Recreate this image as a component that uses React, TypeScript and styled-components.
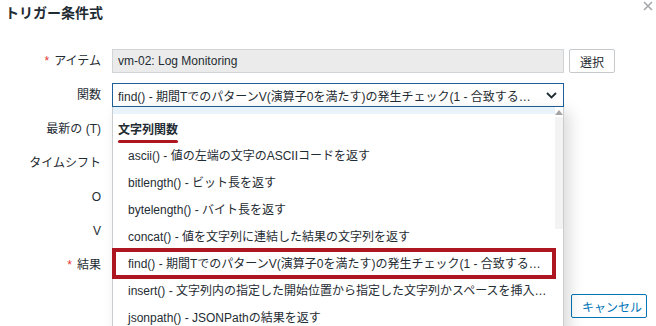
import styled, { createGlobalStyle } from "styled-components";

const GlobalStyle = createGlobalStyle`
  html, body {
    margin: 0;
    padding: 0;
    background: #ffffff;
    overflow: hidden;
  }
  body {
    font-family: "Liberation Sans", "Noto Sans CJK JP", Arial, sans-serif;
    font-size: 12px;
    color: #1f2c33;
  }
  * {
    box-sizing: border-box;
  }
`;

const Dialog = styled.div`
  width: 656px;
  height: 326px;
  display: flex;
  flex-direction: column;
  background: #ffffff;
  overflow: hidden;
`;

const Header = styled.div`
  display: flex;
  justify-content: space-between;
  align-items: flex-start;
  height: 26px;
  padding: 4px 3px 0 5px;
`;

const Title = styled.h4`
  margin: 0;
  font-size: 14px;
  line-height: 18px;
  font-weight: 700;
  color: #1f2c33;
`;

const CloseButton = styled.button`
  display: flex;
  margin-top: -3px;
  padding: 0;
  border: 0;
  background: none;
  color: #a3a8ab;
`;

const Form = styled.div`
  display: grid;
  grid-template-columns: 101px 452px;
  column-gap: 11px;
  row-gap: 10px;
  margin-top: 23px;
`;

const Label = styled.div<{ $required?: boolean }>`
  height: 24px;
  line-height: 24px;
  text-align: right;
  white-space: nowrap;
  color: #1f2c33;

  &::before {
    content: ${(p) => (p.$required ? '"*"' : "none")};
    color: #e33734;
    margin-right: 5px;
  }
`;

const Field = styled.div`
  position: relative;
  display: flex;
  gap: 5px;
  height: 24px;
`;

const TextInput = styled.div<{ $readOnly?: boolean; $width?: number }>`
  width: ${(p) => (p.$width ? `${p.$width}px` : "100%")};
  flex-shrink: 0;
  height: 24px;
  line-height: 22px;
  padding: 0 5px;
  border: 1px solid #d2d5d7;
  background: ${(p) => (p.$readOnly ? "#ebebeb" : "#ffffff")};
  color: #1f2c33;
  white-space: nowrap;
`;

const Button = styled.button<{ $primary?: boolean }>`
  height: 24px;
  padding: 0 10px;
  border: 1px solid ${(p) => (p.$primary ? "#0275b8" : "#c6cacc")};
  border-radius: 2px;
  background: #ffffff;
  color: ${(p) => (p.$primary ? "#0275b8" : "#1f2c33")};
  font-family: inherit;
  font-size: 12px;
  white-space: nowrap;
`;

const SelectBox = styled.div`
  display: flex;
  align-items: center;
  width: 452px;
  height: 24px;
  padding: 0 6px 0 5px;
  border: 1px solid #1d5f96;
  background: #ffffff;
`;

const SelectText = styled.span`
  flex: 1;
  min-width: 0;
  overflow: hidden;
  white-space: nowrap;
  text-overflow: ellipsis;
  padding-right: 6px;
`;

const Dropdown = styled.div`
  position: absolute;
  top: 100%;
  left: 0;
  width: 452px;
  height: 240px;
  display: flex;
  border: 1px solid #c9cdcf;
  border-top: 0;
  background: #ffffff;
  box-shadow: 6px 4px 14px rgba(0, 0, 0, 0.14);
  z-index: 10;
`;

const List = styled.ul`
  flex: 1;
  min-width: 0;
  margin: 0;
  padding: 0;
  list-style: none;
`;

const ScrolledStrip = styled.li`
  height: 7px;
  background: #e8f3fc;
`;

const GroupHeader = styled.li`
  height: 29px;
  padding: 3px 0 0 5px;
  line-height: 26px;
  font-weight: 700;
  color: #1f2c33;
`;

const Marked = styled.span`
  position: relative;

  &::after {
    content: "";
    position: absolute;
    left: 0;
    right: 0;
    bottom: -6px;
    height: 3px;
    border-radius: 2px;
    background: #ad1520;
  }
`;

const OptionSlot = styled.li`
  position: relative;
`;

const OptionText = styled.div`
  height: 27px;
  line-height: 27px;
  padding: 0 8px 0 15px;
  overflow: hidden;
  white-space: nowrap;
  text-overflow: ellipsis;
  color: #1f2c33;
`;

const MarkBox = styled.div`
  position: absolute;
  top: -3px;
  bottom: -1px;
  left: -1px;
  right: -1px;
  border: 4px solid #ad1520;
  pointer-events: none;
`;

const Scrollbar = styled.div`
  width: 8px;
  display: flex;
  flex-direction: column;
  align-items: center;
`;

const ScrollArrow = styled.div`
  margin-top: 3px;
  width: 0;
  height: 0;
  border-left: 4px solid transparent;
  border-right: 4px solid transparent;
  border-bottom: 5px solid #a5a5a5;
`;

const ScrollThumb = styled.div`
  margin-top: 2px;
  width: 8px;
  height: 112px;
  background: #f3f3f3;
`;

const Footer = styled.div`
  display: flex;
  justify-content: flex-end;
  margin-top: 17px;
  padding-right: 9px;
`;

const CancelButton = styled(Button)`
  width: 76px;
`;

const fullFind =
  "find() - 期間TでのパターンV(演算子0を満たす)の発生チェック(1 - 合致する、0 - 合致しない)";

const options = [
  "ascii() - 値の左端の文字のASCIIコードを返す",
  "bitlength() - ビット長を返す",
  "bytelength() - バイト長を返す",
  "concat() - 値を文字列に連結した結果の文字列を返す",
  fullFind,
  "insert() - 文字列内の指定した開始位置から指定した文字列かスペースを挿入して返す",
  "jsonpath() - JSONPathの結果を返す",
  "left() - 左端から指定した文字数の文字列を返す",
];

function Chevron() {
  return (
    <svg width="11" height="7" viewBox="0 0 11 7">
      <path d="M1 1 L5.5 5.5 L10 1" fill="none" stroke="#1f2c33" strokeWidth="1.8" />
    </svg>
  );
}

export default function App() {
  return (
    <>
      <GlobalStyle />
      <Dialog>
        <Header>
          <Title>トリガー条件式</Title>
          <CloseButton aria-label="閉じる">
            <svg width="10" height="10" viewBox="0 0 10 10">
              <path d="M1 1 L9 9 M9 1 L1 9" stroke="currentColor" strokeWidth="1.6" />
            </svg>
          </CloseButton>
        </Header>

        <Form>
          <Label $required>アイテム</Label>
          <Field>
            <TextInput $readOnly $width={452}>
              vm-02: Log Monitoring
            </TextInput>
            <Button>選択</Button>
          </Field>

          <Label>関数</Label>
          <Field>
            <SelectBox>
              <SelectText>{fullFind}</SelectText>
              <Chevron />
            </SelectBox>
            <Dropdown>
              <List>
                <ScrolledStrip />
                <GroupHeader>
                  <Marked>文字列関数</Marked>
                </GroupHeader>
                {options.map((o) => (
                  <OptionSlot key={o}>
                    <OptionText>{o}</OptionText>
                    {o === fullFind && <MarkBox />}
                  </OptionSlot>
                ))}
              </List>
              <Scrollbar>
                <ScrollArrow />
                <ScrollThumb />
              </Scrollbar>
            </Dropdown>
          </Field>

          <Label>最新の (T)</Label>
          <Field>
            <TextInput $width={80} />
          </Field>

          <Label>タイムシフト</Label>
          <Field>
            <TextInput $width={80} />
          </Field>

          <Label>O</Label>
          <Field>
            <TextInput $width={80} />
          </Field>

          <Label>V</Label>
          <Field>
            <TextInput $width={300} />
          </Field>

          <Label $required>結果</Label>
          <Field>
            <TextInput $width={80} />
          </Field>
        </Form>

        <Footer>
          <CancelButton $primary>キャンセル</CancelButton>
        </Footer>
      </Dialog>
    </>
  );
}
